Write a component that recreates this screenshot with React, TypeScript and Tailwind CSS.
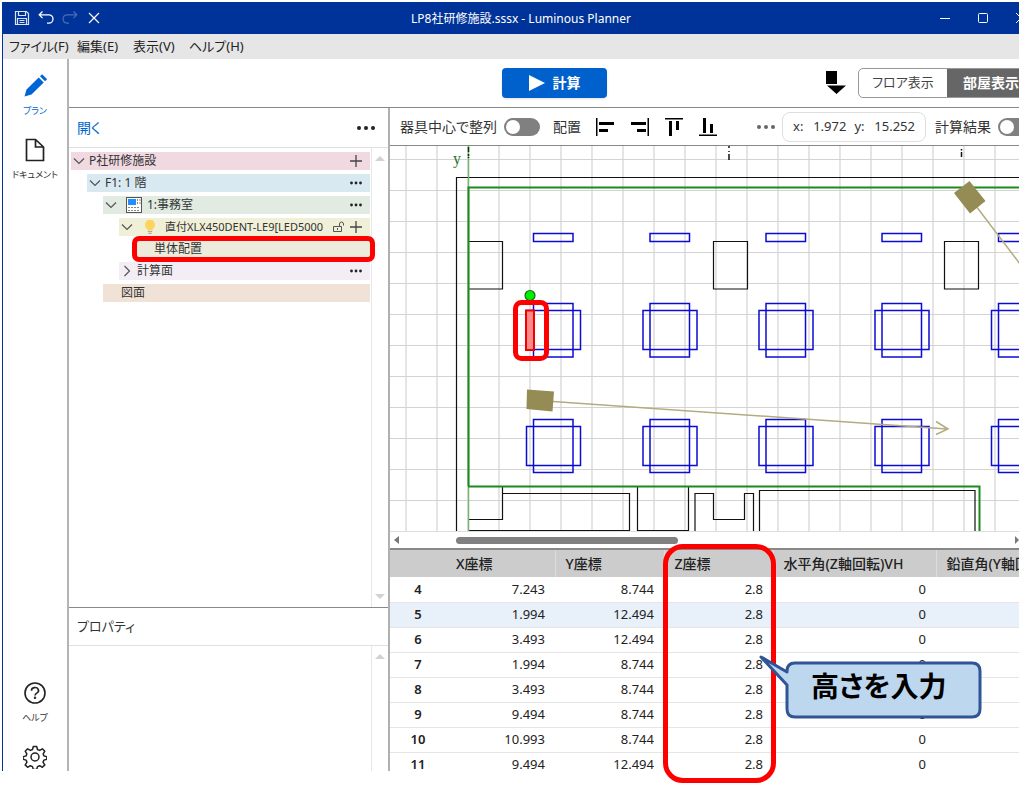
import type { ReactNode } from "react";

const rows = [
  [4, "7.243", "8.744", "2.8", "0"],
  [5, "1.994", "12.494", "2.8", "0"],
  [6, "3.493", "12.494", "2.8", "0"],
  [7, "1.994", "8.744", "2.8", "0"],
  [8, "3.493", "8.744", "2.8", "0"],
  [9, "9.494", "8.744", "2.8", "0"],
  [10, "10.993", "8.744", "2.8", "0"],
  [11, "9.494", "12.494", "2.8", "0"],
];

function Icon({ children, label, className }: { children: ReactNode; label: string; className: string }) {
  return (
    <button type="button" aria-label={label} className={"flex shrink-0 items-center justify-center " + className}>
      {children}
    </button>
  );
}

function TitleBar() {
  return (
    <header className="relative flex h-8 shrink-0 items-center bg-[#003399] text-white">
      <div className="flex items-center gap-2 pl-[11px]">
        <Icon label="保存" className="h-4 w-4">
          <svg width="16" height="16" viewBox="0 0 16 16" fill="none" stroke="#dbe4f5" strokeWidth="1.2">
            <path d="M1.5 1.5h11l2 2v11h-13zM4.5 1.5v4h7v-4M3.5 14.5v-6h9v6M5.5 10.5h5M5.5 12.5h5" />
          </svg>
        </Icon>
        <Icon label="元に戻す" className="h-4 w-4">
          <svg width="16" height="16" viewBox="0 0 16 16" fill="none" stroke="#fff" strokeWidth="1.3">
            <path d="M4.5 1.5L1.2 4.8l3.3 3.3M1.2 4.8h9.6a4.2 4.2 0 0 1 0 8.4H9" />
          </svg>
        </Icon>
        <Icon label="やり直し" className="h-4 w-4">
          <svg width="16" height="16" viewBox="0 0 16 16" fill="none" stroke="#4a6db8" strokeWidth="1.2">
            <path d="M11.5 1.5l3.3 3.3-3.3 3.3M14.8 4.8H5.2a4.2 4.2 0 0 0 0 8.4H7" />
          </svg>
        </Icon>
        <Icon label="閉じる" className="h-4 w-4">
          <svg width="16" height="16" viewBox="0 0 16 16" stroke="#fff" strokeWidth="1.2">
            <path d="M3 3l10 10M13 3L3 13" />
          </svg>
        </Icon>
      </div>
      <h1 className="pointer-events-none absolute inset-x-0 pt-0.5 pl-5 text-center text-xs leading-8">LP8社研修施設.sssx - Luminous Planner</h1>
      <div className="-mr-2 ml-auto flex items-center gap-[26px]">
        <Icon label="最小化" className="h-3 w-3">
          <svg width="12" height="12" stroke="#fff"><path d="M1 6.5h10" /></svg>
        </Icon>
        <Icon label="最大化" className="h-3 w-3">
          <svg width="12" height="12" stroke="#fff" fill="none"><rect x="1.5" y="1.5" width="9" height="9" rx="1" /></svg>
        </Icon>
        <Icon label="ウィンドウを閉じる" className="h-3 w-3">
          <svg width="12" height="12" stroke="#fff"><path d="M1 1l10 10M11 1L1 11" /></svg>
        </Icon>
      </div>
    </header>
  );
}

function Rail() {
  return (
    <nav className="flex w-[66px] shrink-0 flex-col items-center overflow-hidden border-r-2 border-[#b4b4b4] text-[9px] leading-4 text-[#333]">
      <button type="button" className="mt-[13px] flex flex-col items-center gap-[3px] text-[#0066cc]">
        <svg width="28" height="28" viewBox="0 0 28 28" fill="#0066d6">
          <path d="M3.5 24.5l2-7L17.700 5.500l5 5L10.500 22.500zM19 4.200l2.100-2 5 5-2.100 2z" />
        </svg>
        プラン
      </button>
      <button type="button" className="mt-[17px] flex flex-col items-center gap-[3px]">
        <svg width="28" height="28" viewBox="0 0 28 28" fill="none" stroke="#222" strokeWidth="1.700">
          <path d="M5.500 3.500h9l8 7.500v13.500h-17zM14.500 3.500v7.500h8" />
        </svg>
        ドキュメント
      </button>
      <button type="button" className="mt-auto flex flex-col items-center gap-[3px]">
        <svg width="28" height="28" viewBox="0 0 28 28" fill="none" stroke="#222" strokeWidth="1.600">
          <circle cx="14" cy="14" r="10" />
          <path d="M10.500 11.700a3.500 3 0 1 1 5.300 2.400q-1.700 1-1.700 2.300" />
          <circle cx="14" cy="18.700" r=".5" />
        </svg>
        ヘルプ
      </button>
      <button type="button" aria-label="設定" className="mt-[17px] flex h-7 w-7 items-center justify-center">
        <svg width="24" height="24" viewBox="-12 -12 24 24" fill="none" stroke="#222" strokeWidth="1.500" strokeLinejoin="round">
          <path d="M-1.700 -10.500h3.400l.8 3 2.200.9 2.700-1.600 2.400 2.400-1.600 2.700.7 2 3 .8v2.600l-3 .8-.9 2.100 1.800 2.700-2.400 2.400-2.700-1.600-2.200.9-.8 3h-3.400l-.8-3-2.200-.9-2.700 1.600-2.400-2.400 1.800-2.700-.9-2.100-3-.8v-2.600l3-.8.7-2-1.600-2.700 2.400-2.400 2.700 1.600 2.200-.9z" />
          <circle r="4" />
        </svg>
      </button>
    </nav>
  );
}

function Chevron({ closed }: { closed?: boolean }) {
  return (
    <svg className="shrink-0" width="12" height="12" fill="none" stroke="#555" strokeWidth="1.200">
      <path d={closed ? "M3.500 1l5 5-5 5" : "M1 3.500l5 5 5-5"} />
    </svg>
  );
}

const Plus = () => (
  <svg width="14" height="14" stroke="#444" strokeWidth="1.300"><path d="M1 7h12M7 1v12" /></svg>
);

function Dots({ color = "#222", big }: { color?: string; big?: boolean }) {
  return big ? (
    <svg width="20" height="6" fill={color}><circle cx="3" cy="3" r="2" /><circle cx="10" cy="3" r="2" /><circle cx="17" cy="3" r="2" /></svg>
  ) : (
    <svg width="14" height="4" fill={color}><circle cx="2.500" cy="2" r="1.400" /><circle cx="7" cy="2" r="1.400" /><circle cx="11.500" cy="2" r="1.400" /></svg>
  );
}

function TreeRow({ className, children, action }: { className: string; children: ReactNode; action?: ReactNode }) {
  return (
    <li className={"flex h-[18px] items-center gap-1 pr-[7px] text-xs leading-[18px] " + className}>
      {children}
      {action && <button type="button" aria-label="操作" className="ml-auto flex h-4 shrink-0 items-center">{action}</button>}
    </li>
  );
}

function VScroll({ down }: { down?: boolean }) {
  return (
    <div className="flex w-[17px] shrink-0 flex-col items-center justify-between border-l border-[#e8e8e8] pt-2 pb-2">
      <svg width="10" height="5" fill="#d2d2d2"><path d="M0 5l5-5 5 5z" /></svg>
      {down && <svg width="10" height="5" fill="#d2d2d2"><path d="M0 0l5 5 5-5z" /></svg>}
    </div>
  );
}

function SidePanel() {
  return (
    <aside className="flex w-[321px] shrink-0 flex-col border-r-2 border-[#b0b0b0]">
      <div className="flex h-10 shrink-0 items-center justify-between border-b border-[#e0e0e0] pl-2 pr-3">
        <button type="button" className="text-sm text-[#0066cc]">開く</button>
        <Icon label="メニュー" className="h-5"><Dots big /></Icon>
      </div>
      <div className="flex h-[459px] shrink-0">
        <ul className="flex min-w-0 flex-1 flex-col gap-1 pt-1 pr-px pl-0.5 text-[#333]">
          <TreeRow className="bg-[#f0d9e1] pl-0.5" action={<Plus />}><Chevron />P社研修施設</TreeRow>
          <TreeRow className="ml-4 bg-[#d9e9f1] pl-0.5" action={<Dots />}><Chevron />F1: 1 階</TreeRow>
          <TreeRow className="ml-8 bg-[#e1ebe2] pl-0.5" action={<Dots />}>
            <Chevron />
            <svg className="ml-1 shrink-0" width="18" height="16" viewBox="0 0 18 16" fill="none" stroke="#555">
              <rect x="1.500" y=".5" width="15" height="15" fill="#fff" />
              <path d="M3 2h8v6H3z" fill="#1e90ff" stroke="none" />
              <path d="M12.500 2v6M15 2v6M3 10.500h12M3 13.500h12" strokeDasharray="2 1" stroke="#888" />
            </svg>
            1:事務室
          </TreeRow>
          <TreeRow className="ml-12 bg-[#f0efd8] pl-0.5" action={<Plus />}>
            <Chevron />
            <svg className="ml-1.5 shrink-0" width="14" height="16" viewBox="0 0 14 16">
              <path d="M7 .8a5 5 0 0 1 3 9l-.6 1.700H4.600L4 9.800a5 5 0 0 1 3-9z" fill="#ffd45c" />
              <path d="M4.800 12.500h4.400M5.300 14.300h3.400" stroke="#aaa" strokeWidth="1.200" />
            </svg>
            <span className="ml-1 min-w-0 flex-1 text-[11px] whitespace-nowrap">直付XLX450DENT-LE9[LED5000</span>
            <svg className="shrink-0" width="12" height="12" fill="none" stroke="#555">
              <path d="M.5 5.500h8v5h-8zM6.500 5.500V3a2 2 0 0 1 4 0v1.500M4.500 7v2" />
            </svg>
          </TreeRow>
          <TreeRow className="relative ml-[66px] bg-[#edebdb] pl-[17px]">
            単体配置
            <span className="pointer-events-none absolute -inset-x-[5px] -inset-y-1 rounded-[7px] border-[5px] border-[#ff0000]" />
          </TreeRow>
          <TreeRow className="ml-12 bg-[#f3eef5] pl-0.5" action={<Dots />}><Chevron closed />計算面</TreeRow>
          <TreeRow className="ml-8 bg-[#f1e2d7] pl-[18px]">図面</TreeRow>
        </ul>
        <VScroll down />
      </div>
      <h2 className="h-[39px] shrink-0 border-t border-b border-[#e0e0e0] border-t-[#888] pl-2 text-[13px] leading-[37px] text-[#333]">プロパティ</h2>
      <div className="flex min-h-0 flex-1">
        <div className="flex-1" />
        <VScroll />
      </div>
    </aside>
  );
}

function Toggle({ id }: { id: string }) {
  return (
    <input id={id} type="checkbox" className="flex h-[18px] w-9 shrink-0 appearance-none items-center rounded-full bg-[#808080] p-0.5 before:block before:h-3.5 before:w-3.5 before:rounded-full before:bg-white" />
  );
}

function CanvasBar() {
  return (
    <div className="flex h-[38px] shrink-0 items-center overflow-hidden border-b border-[#888] pl-2.5 text-sm whitespace-nowrap text-[#333]">
      <label htmlFor="center" className="w-[104px] shrink-0">器具中心で整列</label>
      <Toggle id="center" />
      <span className="ml-[13px] w-[43px] shrink-0">配置</span>
      <div className="flex w-[160px] shrink-0 gap-[14px] text-black">
        <Icon label="左揃え" className="h-5 w-5"><svg width="20" height="20"><path d="M0 1h1.500v18H0zM3 5h15v3H3zM3 12h9v3H3z" /></svg></Icon>
        <Icon label="右揃え" className="h-5 w-5"><svg width="20" height="20"><path d="M17.500 1H19v18h-1.500zM1 5h15v3H1zM7 12h9v3H7z" /></svg></Icon>
        <Icon label="上揃え" className="h-5 w-5"><svg width="20" height="20"><path d="M1 1h18v1.500H1zM5 4h3v15H5zM12 4h3v9h-3z" /></svg></Icon>
        <Icon label="下揃え" className="h-5 w-5"><svg width="20" height="20"><path d="M1 17.500h18V19H1zM5 1h3v15H5zM12 7h3v9h-3z" /></svg></Icon>
      </div>
      <Icon label="その他" className="h-5 w-5"><Dots big color="#666" /></Icon>
      <output className="ml-1.5 flex h-[30px] w-36 shrink-0 items-center rounded-lg border border-[#ddd] px-2.5 text-[13px]">
        <span>x:</span><span className="ml-auto">1.972</span><span className="ml-2">y:</span><span className="ml-auto">15.252</span>
      </output>
      <label htmlFor="result" className="ml-[9px] w-[63px] shrink-0">計算結果</label>
      <Toggle id="result" />
    </div>
  );
}

const columnsX = [533.5, 650, 766, 882, 998.5];
const gridX = Array.from({ length: 60 }, (_, i) => 406 + i * 31);
const gridY = Array.from({ length: 24 }, (_, i) => 159.5 + i * 31);

function Plan() {
  return (
    <svg className="block h-[385px] w-full shrink-0 bg-white" viewBox="390 146 630 385" preserveAspectRatio="xMinYMin slice" role="img" aria-label="平面図">
      <g stroke="#d3d3d3" strokeWidth="1.200">
        {gridX.map((x) => <path key={x} d={`M${x} 146V900`} />)}
        {gridY.map((y) => <path key={y} d={`M390 ${y}H2400`} />)}
      </g>
      <g fill="none" stroke="#111" strokeWidth="1.200">
        <path d="M456.500 531V177.500H2400" />
        <path d="M469 241.500h33.500v47.500H469M713.500 241.500h34v47.500h-34zM944.500 241.500h34v47.500h-34z" />
        <path d="M468.500 519.500H502.500V487M502.500 493.500H629.500V530.500H468.500M637.500 487V530.500H688.500V487M695 531V493.500H713.500V519.500H744.500V493.500H753.500V531M759.500 531V490.500H975V531" />
        <path d="M729 146v14" strokeDasharray="2 3 1 2 6 9" strokeWidth="1.500" />
        <path d="M961.500 149v1.500M961.500 152v5" strokeWidth="1.500" />
      </g>
      <path d="M468.500 146V531" stroke="#77b577" strokeWidth="1.500" />
      <path d="M468.500 147v11" stroke="#063d06" strokeDasharray="5 2 2 1" strokeWidth="1.500" />
      <path d="M468.500 486V187.500H2400M468 486.500H979.500V531" fill="none" stroke="#1d8a1d" strokeWidth="2" />
      <text x="453" y="164" fill="#267326" className="font-['Liberation_Serif',serif] text-base">y</text>
      <g fill="none" stroke="#0b0bd4" strokeWidth="1.500">
        {columnsX.map((x) => (
          <g key={x}>
            <rect x={x} y="233.500" width="39.500" height="8" />
            <rect x={x} y="303.500" width="39.500" height="53.500" />
            <rect x={x - 7} y="310.500" width="54" height="39" />
            <rect x={x} y="419.500" width="39.500" height="53" />
            <rect x={x - 7} y="426.500" width="54" height="39" />
          </g>
        ))}
      </g>
      <g stroke="#b5ab80" strokeWidth="1.500" fill="none">
        <path d="M553 401.500L947 429M936 421.500L948 429L936 434.500M976 206L1020 264" />
        <path d="M527 389.500l27 2-1.500 20-26-2.500zM954 193l15.500-12 16 20-15.500 12.500z" fill="#958b55" stroke="none" />
      </g>
      <rect x="526" y="310.500" width="8" height="39.500" fill="#ff8a8a" stroke="#f00000" strokeWidth="2" />
      <circle cx="530" cy="295.500" r="5" fill="#00f000" stroke="#176b17" strokeWidth="1.200" />
      <rect x="515.500" y="302.500" width="31" height="56" rx="6" fill="none" stroke="#f00" strokeWidth="5" />
    </svg>
  );
}

function CoordTable() {
  const head = "h-[27px] border-r border-[#ddd] bg-clip-padding px-2.5 text-left text-sm font-medium";
  const num = "pr-2.5 text-right";
  return (
    <div className="min-h-0 flex-1 overflow-hidden border-t-2 border-[#888]">
      <table className="w-full min-w-[700px] table-fixed border-collapse text-[13px] whitespace-nowrap text-[#222]">
        <colgroup>
          <col className="w-14" /><col className="w-[109px]" /><col className="w-[109px]" /><col className="w-[109px]" /><col className="w-[163px]" /><col />
        </colgroup>
        <thead className="bg-[#cccccc]">
          <tr>
            <th aria-label="番号" />
            <th className={head}>X座標</th>
            <th className={head}>Y座標</th>
            <th className={head}>Z座標</th>
            <th className={head}>水平角(Z軸回転)VH</th>
            <th className={head}>鉛直角(Y軸回転)</th>
          </tr>
        </thead>
        <tbody>
          {rows.map(([id, x, y, z, vh]) => (
            <tr key={id} className={"h-[25px] border-b border-[#e5e5e5] " + (id === 5 ? "bg-[#e8f0fa]" : "")}>
              <th className="font-semibold">{id}</th>
              <td className={num}>{x}</td>
              <td className={num}>{y}</td>
              <td className={num}>{z}</td>
              <td className={num}>{vh}</td>
              <td />
            </tr>
          ))}
        </tbody>
      </table>
    </div>
  );
}

export default function App() {
  return (
    <div className="relative flex h-screen flex-col overflow-hidden bg-white pt-0.5 pr-px pb-[18px] pl-0.5 font-['Noto_Sans','Noto_Sans_CJK_JP',sans-serif] [font-feature-settings:'palt']">
      <div className="flex min-h-0 flex-1 flex-col overflow-hidden border-l border-[#003399]">
        <TitleBar />
        <nav className="flex h-[25px] shrink-0 items-center bg-[#e6e6e6] pl-1.5 text-[13px] text-[#222]">
          <button type="button" className="w-[68px] text-left">ファイル(F)</button>
          <button type="button" className="w-14 text-left">編集(E)</button>
          <button type="button" className="w-14 text-left">表示(V)</button>
          <button type="button" className="w-14 text-left">ヘルプ(H)</button>
        </nav>
        <div className="flex min-h-0 flex-1">
          <Rail />
          <div className="flex min-w-0 flex-1 flex-col">
            <div className="relative flex h-[49px] shrink-0 items-center justify-end overflow-hidden border-b border-[#888]">
              <button type="button" className="absolute left-[433px] flex h-[30px] w-[105px] items-center justify-center gap-2 rounded bg-[#0060cc] text-sm font-bold text-white shadow">
                <svg width="16" height="16" fill="#fff"><path d="M0 0l16 8-16 8z" /></svg>
                計算
              </button>
              <Icon label="方向" className="mr-3 h-6 w-5">
                <svg width="20" height="24"><path d="M0 0h11v13H0zM1 14.500h19L10.500 23z" /></svg>
              </Icon>
              <div className="-mr-[17px] flex h-[30px] shrink-0 overflow-hidden rounded-[5px] border border-[#999] text-[13px]">
                <button type="button" className="w-[88px] text-[#444]">フロア表示</button>
                <button type="button" className="w-[88px] bg-[#666] text-sm font-bold text-white">部屋表示</button>
              </div>
            </div>
            <div className="flex min-h-0 flex-1">
              <SidePanel />
              <main className="flex min-w-0 flex-1 flex-col">
                <CanvasBar />
                <Plan />
                <div className="flex h-[17px] shrink-0 items-center justify-between border-t border-[#ddd] pl-1">
                  <svg width="5" height="8" fill="#777"><path d="M5 0v8L0 4z" /></svg>
                  <div className="mr-auto ml-[57px] h-[7px] w-[222px] rounded-full bg-[#808080]" />
                  <svg width="4" height="8" fill="#777"><path d="M0 0v8l4-4z" /></svg>
                </div>
                <CoordTable />
              </main>
            </div>
          </div>
        </div>
      </div>
      <div className="pointer-events-none absolute top-[544px] left-[663px] h-[239px] w-[113px] rounded-[20px] border-[5px] border-[#ff0000]" />
      <div className="absolute top-[654px] left-[758px] h-[66px] w-[226px]">
        <svg className="absolute inset-0" width="226" height="66" fill="#bdd7ee" stroke="#2f5597" strokeWidth="3" strokeLinejoin="round">
          <path d="M37 9h177q8 0 8 8v38q0 8-8 8H37q-8 0-8-8V31L3 3l26 15v-1q0-8 8-8z" />
        </svg>
        <p className="relative pt-3 pl-[53px] text-[28px] leading-10 font-bold text-black">高さを入力</p>
      </div>
    </div>
  );
}
